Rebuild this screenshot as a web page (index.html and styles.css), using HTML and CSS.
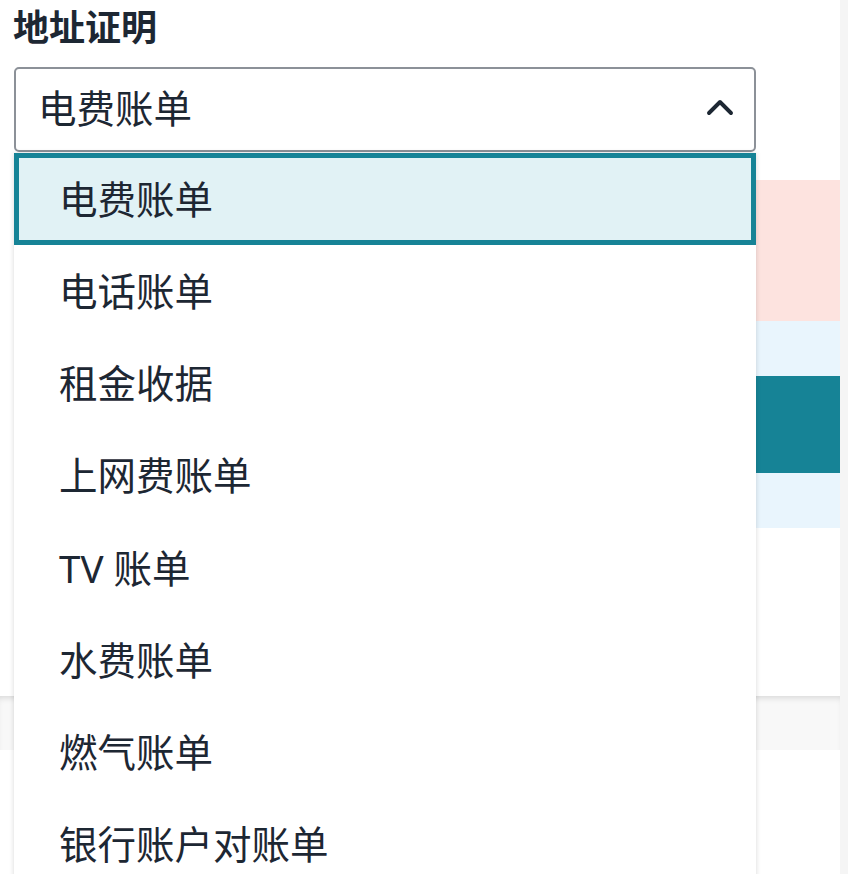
FILE: index.html
```html
<!DOCTYPE html>
<html lang="zh">
<head>
<meta charset="utf-8">
<link rel="stylesheet" href="styles.css">
</head>
<body>
<div class="page">
  <div class="field">
    <label class="label">地址证明</label>
    <div class="select">
      <span class="select-value">电费账单</span>
      <svg class="chevron" width="28" height="18" viewBox="0 0 28 18"><path d="M3 15 L14 4 L25 15" fill="none" stroke="#1d2733" stroke-width="3.9" stroke-linecap="round" stroke-linejoin="round"/></svg>
    </div>
    <ul class="menu">
      <li class="option selected">电费账单</li>
      <li class="option">电话账单</li>
      <li class="option">租金收据</li>
      <li class="option">上网费账单</li>
      <li class="option">TV 账单</li>
      <li class="option">水费账单</li>
      <li class="option">燃气账单</li>
      <li class="option">银行账户对账单</li>
    </ul>
  </div>
  <div class="bands">
    <div class="band pink"></div>
    <div class="band light short"></div>
    <div class="band teal"></div>
    <div class="band light short"></div>
    <div class="band white"></div>
  </div>
  <div class="grayband"></div>
  <div class="rest"></div>
</div>
</body>
</html>
```

FILE: styles.css
```css
html, body {
  margin: 0;
  padding: 0;
  background: #f5f5f5;
  height: 874px;
  overflow: hidden;
}
.page {
  width: 840px;
  height: 874px;
  background: #ffffff;
  font-family: "Noto Sans", "Noto Sans CJK SC", sans-serif;
  color: #1d2733;
}
.field {
  position: relative;
  padding: 6px 0 0 14px;
}
.label {
  display: block;
  font-size: 36px;
  font-weight: 700;
  line-height: 44px;
  height: 44px;
  margin-left: -1px;
}
.select {
  margin-top: 17px;
  width: 742px;
  height: 85px;
  box-sizing: border-box;
  border: 2px solid #8c9198;
  border-radius: 5px;
  display: flex;
  align-items: center;
  justify-content: space-between;
  padding: 0 20px 0 22px;
}
.select-value {
  font-size: 38.5px;
  line-height: 1;
  padding-bottom: 2px;
}
.chevron {
  display: block;
  margin-bottom: 5px;
}
.menu {
  position: absolute;
  left: 14px;
  top: 153px;
  width: 742px;
  margin: 0;
  padding: 0;
  list-style: none;
  background: #ffffff;
  box-shadow: 0 0 5px rgba(0, 0, 0, 0.16);
  z-index: 5;
}
.option {
  height: 92.2px;
  box-sizing: border-box;
  border: 5px solid transparent;
  padding-left: 40px;
  display: flex;
  align-items: center;
  font-size: 38.5px;
  line-height: 1;
}
.option.selected {
  background: #e1f2f5;
  border-color: #168396;
}
.bands {
  margin: 28px 0 0 14px;
}
.band { height: 55px; }
.pink { height: 141px; background: #fde3df; }
.light { background: #e9f5fd; }
.teal { height: 97px; background: #168396; }
.white { height: 168px; background: #ffffff; }
.grayband {
  height: 54px;
  background: #f8f8f8;
  box-shadow: inset 0 5px 6px -3px rgba(0, 0, 0, 0.13);
}
.rest { background: #ffffff; }
```
